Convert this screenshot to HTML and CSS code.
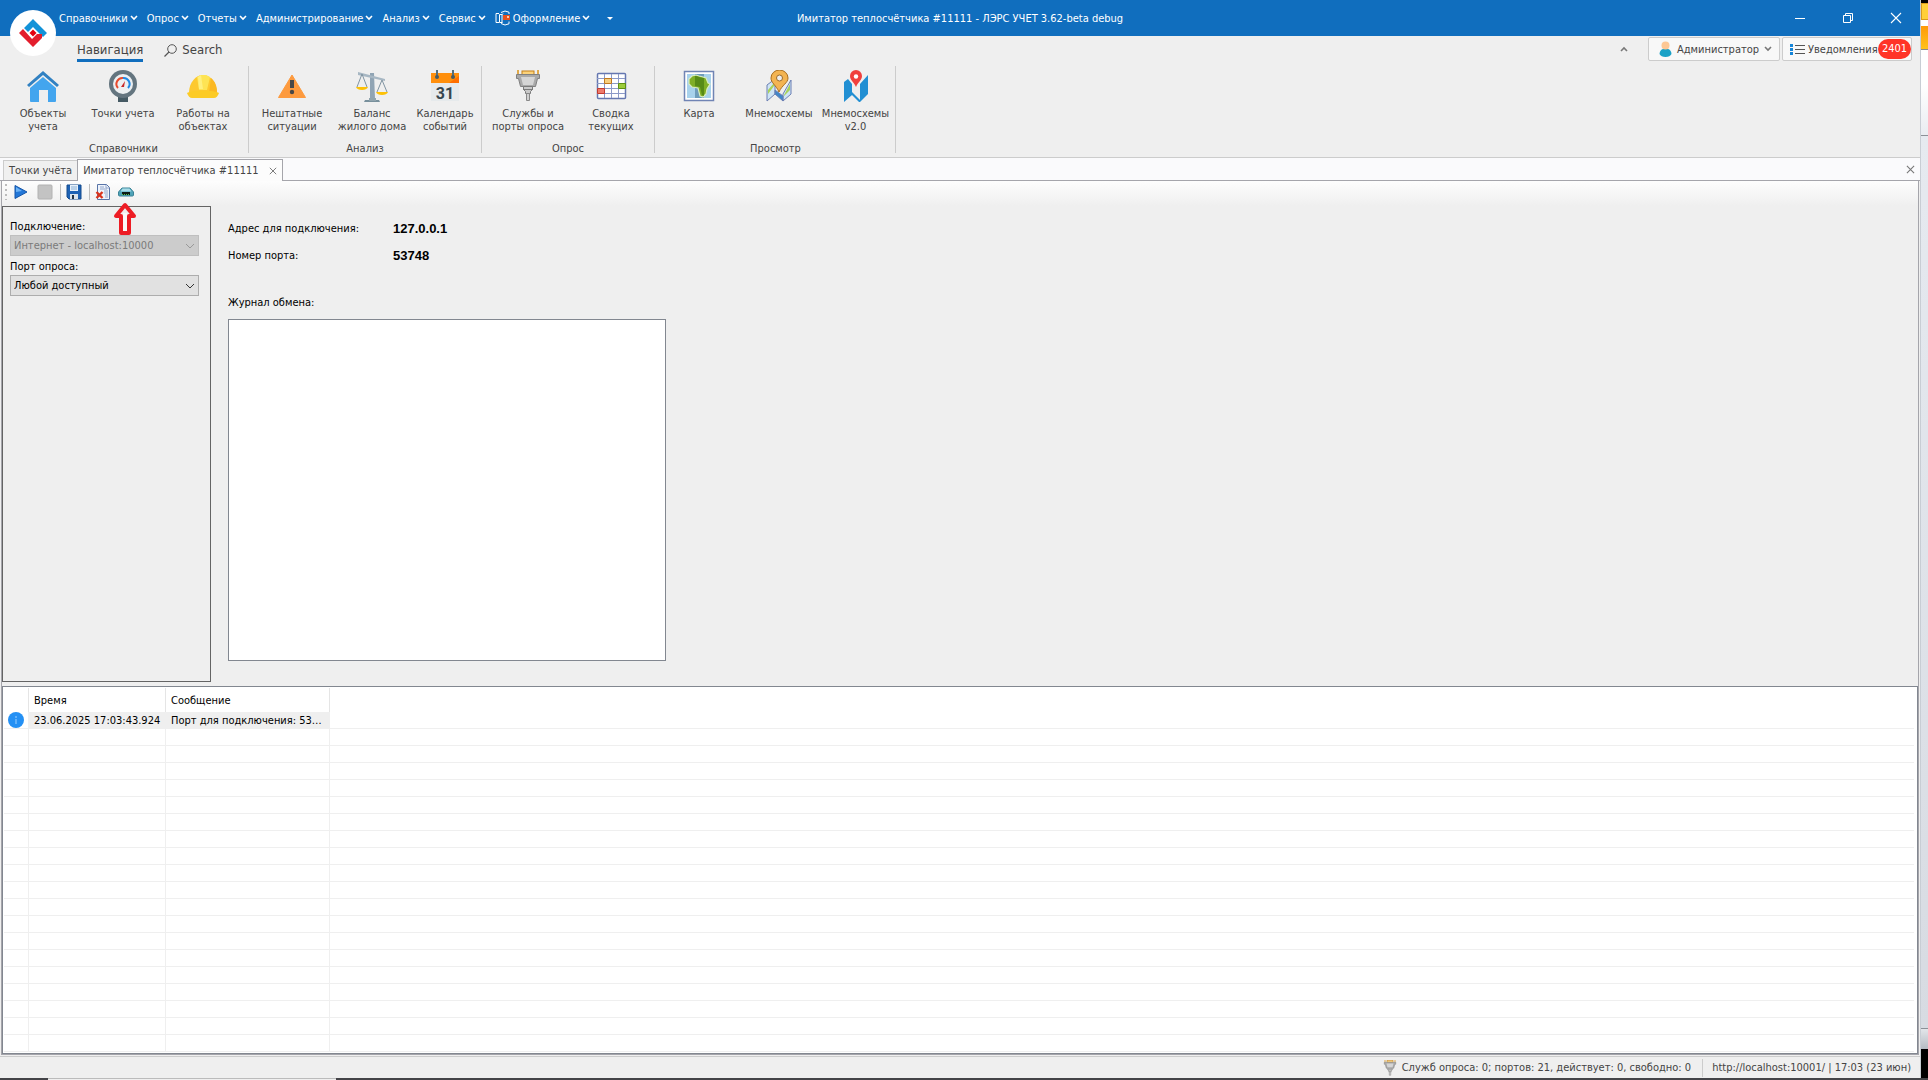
FILE: index.html
```
<!DOCTYPE html>
<html lang="ru">
<head>
<meta charset="utf-8">
<title>Имитатор теплосчётчика #11111 - ЛЭРС УЧЕТ 3.62-beta debug</title>
<link rel="stylesheet" href="styles.css">
</head>
<body>
<svg class="defs" aria-hidden="true">
  <symbol id="chev" viewBox="0 0 8 6"><path d="M1 1l3 3 3-3" fill="none" stroke="currentColor" stroke-width="1.6"/></symbol>
  <symbol id="cross" viewBox="0 0 10 10"><path d="M1 1l8 8M9 1L1 9" fill="none" stroke="currentColor" stroke-width="1.2"/></symbol>
  <symbol id="plug" viewBox="0 0 32 32">
    <rect x="10" y="1" width="12" height="4" fill="#fbd27a" stroke="#c47f17"/>
    <path d="M6 0v5M26 0v5" stroke="#e0a94a" stroke-width="2"/>
    <path d="M4.500 4.500h23v4h-2l-2 8h-15l-2-8h-2z" fill="#a9a9a9" stroke="#808080"/><path d="M9 7h14l-2 8H11z" fill="#d5d5d5"/>
    <path d="M11.500 16.500h9v3l-2 2v2h-5v-2l-2-2z" fill="#c9c9c9" stroke="#7a7a7a"/><path d="M11 19.500h10" stroke="#7a7a7a"/>
    <path d="M14.500 23.500h3v7h-3z" fill="#d0d0d0" stroke="#888"/>
  </symbol>
</svg>
<div class="desktop">
  <div class="window">
    <header class="titlebar">
      <nav class="menu" aria-label="Меню">
        <button>Справочники<svg class="chev"><use href="#chev"/></svg></button>
        <button>Опрос<svg class="chev"><use href="#chev"/></svg></button>
        <button>Отчеты<svg class="chev"><use href="#chev"/></svg></button>
        <button>Администрирование<svg class="chev"><use href="#chev"/></svg></button>
        <button>Анализ<svg class="chev"><use href="#chev"/></svg></button>
        <button>Сервис<svg class="chev"><use href="#chev"/></svg></button>
        <button><svg class="skin" viewBox="0 0 16 16"><path d="M4 3.500H1v9h3M7.500 12.500h-3v-8h3M8 3.500l-1 1v8M6 2.500L10 1l4 1.200V4M14 11.500v2.300L10 15l-4-1.500" fill="none" stroke="#fff"/><rect x="8" y="5" width="7" height="5" fill="#e8501c"/><rect x="12" y="6" width="2" height="2" fill="#ffc9a8"/></svg>Оформление<svg class="chev"><use href="#chev"/></svg></button>
        <button class="more" aria-label="Ещё"><svg class="tri" viewBox="0 0 6 3"><path d="M0 0h6L3 3z" fill="#fff"/></svg></button>
      </nav>
      <h1 class="caption">Имитатор теплосчётчика #11111 - ЛЭРС УЧЕТ 3.62-beta debug</h1>
      <div class="wincontrols">
        <button aria-label="Свернуть"><svg viewBox="0 0 10 10"><path d="M0 5.500h10" stroke="#fff"/></svg></button>
        <button aria-label="Восстановить"><svg viewBox="0 0 10 10"><path d="M.5 2.500h7v7h-7zM2.500 2.500v-2h7v7h-2" fill="none" stroke="#fff"/></svg></button>
        <button aria-label="Закрыть"><svg viewBox="0 0 10 10"><path d="M0 0l10 10M10 0L0 10" stroke="#fff" stroke-width="1.100"/></svg></button>
      </div>
    </header>
    <svg class="logo" viewBox="0 0 46 46"><circle cx="23" cy="23" r="23" fill="#fff"/>
      <path d="M23 9l14 14-4 4-10-10-5 5-4-4z" fill="#1292d8"/><path d="M9 23l4-4 9 10 5-5h5v4L23 37z" fill="#e31e2d"/><path d="M23 19.500l3.500 3.500-3.500 3.500-3.500-3.500z" fill="#e3000f"/></svg>

    <section class="ribbon">
      <div class="ribbon-tabs">
        <button class="rtab active">Навигация</button>
        <button class="rtab search"><svg viewBox="0 0 13 13"><circle cx="8" cy="5" r="4.300" fill="none" stroke="#555"/><path d="M5 8l-4.500 4.500" stroke="#555" stroke-width="1.300"/></svg>Search</button>
        <div class="account">
          <button class="collapse" aria-label="Свернуть ленту"><svg class="chev up"><use href="#chev"/></svg></button>
          <button class="boxed admin"><svg viewBox="0 0 13 16"><path d="M.5 13c0-3 2-5 4-5h4c2 0 4 2 4 5-1 2-3 3-6 3s-5-1-6-3z" fill="#1ba1c6"/><circle cx="6.500" cy="4.500" r="4" fill="#fdc794"/></svg>Администратор<svg class="chev"><use href="#chev"/></svg></button>
          <button class="boxed notes"><svg viewBox="0 0 15 11"><path d="M5 1.500h10M5 5.500h10M5 9.500h10" stroke="#555"/><path d="M0 1.500h3M0 5.500h3M0 9.500h3" stroke="#1585d8" stroke-width="3" stroke-dasharray="3"/></svg>Уведомления<span class="badge">2401</span></button>
        </div>
      </div>
      <div class="groups">
        <div class="group">
          <div class="items">
            <button><svg viewBox="0 0 32 32"><path d="M0 15L16 1l16 14-2 2L16 5 2 17z" fill="#3181c2"/><path d="M3 18L16 7l13 11v13a1 1 0 0 1-1 1h-7V20h-9v12H4a1 1 0 0 1-1-1z" fill="#43a5ee"/></svg>Объекты<br>учета</button>
            <button><svg viewBox="0 0 32 32"><path d="M11 25h10v7H11z" fill="#455a64"/><circle cx="16" cy="14" r="14" fill="#64757f"/><circle cx="16" cy="14" r="10" fill="#eceff1"/><path d="M11 18a6 6 0 0 1 5-10" fill="none" stroke="#e64a2e" stroke-width="2"/><path d="M16 8a6 6 0 0 1 5 10" fill="none" stroke="#1e88e5" stroke-width="2"/><path d="M14 17l4-6-1 6z" fill="#c62828"/></svg>Точки учета</button>
            <button><svg viewBox="0 0 32 32"><path d="M2 23C2 12 9 5 16 5s14 7 14 18z" fill="#fdc92e"/><path d="M24 8c4 3 6 8 6 15h-8z" fill="#fbb823"/><path d="M10 7l4-2h5l4 2-3 13h-8z" fill="#fee454"/><path d="M11 7l3-2 2 14h-4z" fill="#fff07e"/><path d="M0 23c4-3 28-3 32 0-1 3-3 5-5 5H5c-2 0-4-2-5-5z" fill="#fccb25"/></svg>Работы на<br>объектах</button>
          </div>
          <div class="gcap">Справочники</div>
        </div>
        <div class="group">
          <div class="items">
            <button><svg viewBox="0 0 32 32"><path d="M16 5l13.500 22.500h-27z" fill="#fd9a3e" stroke="#fd9a3e" stroke-linejoin="round"/><path d="M14 10h4v8h-4z" fill="#484848"/><circle cx="16" cy="22" r="2.200" fill="#484848"/></svg>Нештатные<br>ситуации</button>
            <button><svg viewBox="0 0 32 32"><path d="M14 3h4l1 26h-5z" fill="#90a4b4"/><path d="M2 2l27 7v2L2 5z" fill="#a7b7c3"/><path d="M9 30h14l1 2H8z" fill="#78909c"/><path d="M13 28h7v3h-7z" fill="#90a4ae"/><path d="M6 4L1 17M6 4l5 13M26 10l-5 12M26 10l5 12" fill="none" stroke="#8094a2"/><path d="M0 17h12c-1 4-11 4-12 0zM20 22h12c-1 4-11 4-12 0z" fill="#fdc107"/></svg>Баланс<br>жилого дома</button>
            <button class="narrow"><svg viewBox="0 0 32 32"><path d="M2 13h28v18H2z" fill="#e6eaec"/><path d="M2 3h28v10H2z" fill="#ff8f0c"/><path d="M20 13L30 6v7z" fill="#ff6f00"/><path d="M8 0v6M24 0v6" stroke="#546e7a" stroke-width="2"/><circle cx="8" cy="7" r="2" fill="#455a64"/><circle cx="24" cy="7" r="2" fill="#455a64"/><text x="16" y="29" text-anchor="middle" class="calnum">31</text></svg>Календарь<br>событий</button>
          </div>
          <div class="gcap">Анализ</div>
        </div>
        <div class="group">
          <div class="items">
            <button class="wide"><svg><use href="#plug"/></svg>Службы и<br>порты опроса</button>
            <button><svg viewBox="0 0 32 32"><rect x="2.500" y="3.500" width="28" height="25" rx="1" fill="#fff" stroke="#6577b0" stroke-width="1.500"/><path d="M2 8.500h28M2 13.500h28M2 18.500h28M2 23.500h28M9.500 4v24M16.500 4v24M23.500 4v24" stroke="#8c9ac8"/><path d="M9.500 8.500h7v5h-7z" fill="#f8cf7c" stroke="#c0791f"/><path d="M23.500 13.500h7v5h-7z" fill="#9ccc3c" stroke="#5d8f12"/><path d="M2.500 18.500h7v5h-7z" fill="#ee7b6c" stroke="#c23a2e"/></svg>Сводка<br>текущих</button>
          </div>
          <div class="gcap">Опрос</div>
        </div>
        <div class="group">
          <div class="items">
            <button><svg viewBox="0 0 32 32"><path d="M1.500 1.500h29v29h-29z" fill="#fff" stroke="#7084b4" stroke-width="1.500"/><path d="M4 4h24v24H4z" fill="#a8d2ec"/><path d="M12 4h9v24h-9z" fill="#6f9dbb"/><path d="M6 9l3-3 4-1 3 1 4 1 3 1 2 5 2 1-3 5-1 5-3 3-3-1-2-8-6-1-3-3z" fill="#7fae26" stroke="#d9ecc0" stroke-width="1.200"/><path d="M12 6h1l3 1 4 1 1 0v18l-2-1-2-8-5-1z" fill="#578a17"/></svg>Карта</button>
            <button><svg viewBox="0 0 32 32"><path d="M4 15l8-6v15l-8 7zM20 24l8-14v14l-8 7z" fill="#cfe5f5" stroke="#6b7fb3"/><path d="M12 20l8 6v5l-8-7z" fill="#3e87c9" stroke="#6b7fb3"/><path d="M5 20l6-7v3l-6 8zM21 25l6-11v6l-6 6z" fill="#a8d25a"/><path d="M16 22C13 15 8 13 8 8a8.500 8 0 0 1 17 0c0 5-6 7-9 14z" fill="#f3b452" stroke="#a96d1e"/><circle cx="16.500" cy="8" r="3" fill="#eee" stroke="#9b6a2a"/></svg>Мнемосхемы</button>
            <button class="mid"><svg viewBox="0 0 32 32"><path d="M4 12l4-3 4 5v11l-8 7zM12 22l8 8v2h-1l-8-8zM20 14l8-9v19l-8 8z" fill="#218fd3"/><path d="M12 14l8 3v11l-8-7z" fill="#eee"/><path d="M16 17C14 12 10 10 10 6a6 6 0 0 1 12 0c0 4-4 6-6 11z" fill="#f0403d"/><circle cx="16" cy="6.500" r="2.200" fill="#fff"/></svg>Мнемосхемы<br>v2.0</button>
          </div>
          <div class="gcap">Просмотр</div>
        </div>
      </div>
    </section>

    <div class="doctabs">
      <button class="dtab">Точки учёта</button>
      <button class="dtab current">Имитатор теплосчётчика #11111<svg class="x"><use href="#cross"/></svg></button>
      <button class="closeall" aria-label="Закрыть"><svg class="x"><use href="#cross"/></svg></button>
    </div>

    <main class="doc">
      <div class="toolbar">
        <span class="grip"></span>
        <button aria-label="Пуск"><svg viewBox="0 0 16 16"><path d="M2 1.500L14 8 2 14.500z" fill="#2277d8" stroke="#1555a8"/><path d="M3 3l6 4-6 1z" fill="#6cb2f5"/></svg></button>
        <button class="gap" aria-label="Стоп" disabled><svg viewBox="0 0 16 16"><rect x="1" y="1" width="14" height="14" rx="1" fill="#c3c3c3" stroke="#b2b2b2"/></svg></button>
        <span class="tsep"></span>
        <button aria-label="Сохранить"><svg viewBox="0 0 16 16"><path d="M1 1h14v14H3l-2-2z" fill="#1d62b5" stroke="#154a8c"/><path d="M4 1h8v6H4z" fill="#e8f1fa"/><path d="M5 3h6M5 5h6" stroke="#8bb0d6"/><path d="M4 10h8v5H4z" fill="#dbe3ea"/><path d="M6 11h2v4H6z" fill="#234"/></svg></button>
        <span class="tsep"></span>
        <button aria-label="Очистить"><svg viewBox="0 0 16 16"><path d="M2.500.5h9l3 3v12h-12z" fill="#eef3fb" stroke="#5874a8"/><path d="M11 1v3h3M5 3h4M5 5h7M9 7h4M9 9h4M10 11h3M10 13h3" stroke="#93a7cc" fill="none"/><path d="M1.500 8l6 6M7.500 8l-6 6" stroke="#d9331c" stroke-width="2.400"/></svg></button>
        <button class="modem" aria-label="Модем"><svg viewBox="0 0 16 16"><path d="M4 4h8l3.500 4v3c0 1-1 1-1 1h-13s-1 0-1-1V8z" fill="#4fa3b8" stroke="#3c8296"/><path d="M4.500 4.500h7l2 3h-11z" fill="#a8dce8"/><path d="M4 8h8v3H4z" fill="#101a14"/><path d="M4 10.500h8" stroke="#57c24f" stroke-dasharray="1 1"/></svg></button>
        <svg class="pointer" viewBox="0 0 24 34"><path d="M12 3L3 14h5v17h8V14h5z" fill="none" stroke="#ed1c24" stroke-width="4" stroke-linejoin="round"/><path d="M10 11h4v18h-4z" fill="#fafafa"/></svg>
      </div>
      <div class="workspace">
        <form class="side">
          <label for="conn">Подключение:</label>
          <div class="combo"><select id="conn" disabled><option>Интернет - localhost:10000</option></select><svg viewBox="0 0 10 6"><path d="M1 1l4 4 4-4" fill="none" stroke="#999"/></svg></div>
          <label for="port">Порт опроса:</label>
          <div class="combo"><select id="port"><option>Любой доступный</option></select><svg viewBox="0 0 10 6"><path d="M1 1l4 4 4-4" fill="none" stroke="#333"/></svg></div>
        </form>
        <div class="details">
          <dl class="facts">
            <dt>Адрес для подключения:</dt><dd>127.0.0.1</dd>
            <dt>Номер порта:</dt><dd>53748</dd>
          </dl>
          <label for="log">Журнал обмена:</label>
          <textarea id="log" readonly></textarea>
        </div>
      </div>
      <div class="journal">
        <table>
          <colgroup><col class="c-icon"><col class="c-time"><col class="c-msg"><col></colgroup>
          <thead><tr><th></th><th>Время</th><th>Сообщение</th><th></th></tr></thead>
          <tbody>
            <tr class="sel"><td><svg viewBox="0 0 16 16"><circle cx="8" cy="8" r="8" fill="#2490f4"/><path d="M8 7v5M8 4v2" stroke="#9cd0ff"/></svg></td><td>23.06.2025 17:03:43.924</td><td class="msg">Порт для подключения: 53748</td><td></td></tr>
            <tr><td></td><td></td><td></td><td></td></tr><tr><td></td><td></td><td></td><td></td></tr>
            <tr><td></td><td></td><td></td><td></td></tr><tr><td></td><td></td><td></td><td></td></tr>
            <tr><td></td><td></td><td></td><td></td></tr><tr><td></td><td></td><td></td><td></td></tr>
            <tr><td></td><td></td><td></td><td></td></tr><tr><td></td><td></td><td></td><td></td></tr>
            <tr><td></td><td></td><td></td><td></td></tr><tr><td></td><td></td><td></td><td></td></tr>
            <tr><td></td><td></td><td></td><td></td></tr><tr><td></td><td></td><td></td><td></td></tr>
            <tr><td></td><td></td><td></td><td></td></tr><tr><td></td><td></td><td></td><td></td></tr>
            <tr><td></td><td></td><td></td><td></td></tr><tr><td></td><td></td><td></td><td></td></tr>
            <tr><td></td><td></td><td></td><td></td></tr><tr><td></td><td></td><td></td><td></td></tr>
            <tr><td></td><td></td><td></td><td></td></tr>
          </tbody>
        </table>
      </div>
    </main>

    <footer class="status">
      <svg viewBox="0 0 32 32"><use href="#plug"/></svg>
      <span>Служб опроса: 0; портов: 21, действует: 0, свободно: 0</span>
      <span class="srv">http://localhost:10001/ | 17:03 (23 июн)</span>
    </footer>
  </div>
  <aside class="behind">
    <div class="b-top"></div><div class="b-icon"></div><div class="b-gap"></div><div class="b-tab"></div><div class="b-ribbon"></div>
    <div class="b-body"></div><div class="b-foot"></div><div class="b-dark"></div>
  </aside>
  <div class="taskbar"><span></span></div>
</div>
</body>
</html>
```
FILE: styles.css
```
* { box-sizing: border-box; }
body {
  margin: 0;
  font: 11px/13px "DejaVu Sans Condensed", "DejaVu Sans", sans-serif;
  color: #000;
  background: #000;
}
button { font: inherit; color: inherit; background: none; border: 0; padding: 0; margin: 0; }
svg { display: block; flex: none; }
.defs { position: absolute; width: 0; height: 0; }
.chev { width: 8px; height: 6px; }
.up { transform: rotate(180deg); }
.x { width: 9px; height: 9px; color: #777; }

.desktop {
  display: grid;
  grid-template: 1fr 2px / 1fr 8px;
  min-height: 100vh;
}
.window {
  position: relative;
  display: flex;
  flex-direction: column;
  min-width: 0;
  background: #efefef;
}

/* title bar */
.titlebar {
  display: grid;
  grid-template-columns: 1fr auto 1fr;
  align-items: center;
  height: 36px;
  background: #106ebe;
  color: #fff;
}
.menu { display: flex; gap: 9px; padding-left: 59px; }
.menu button { display: flex; align-items: center; gap: 2px; white-space: nowrap; }
.menu .more { margin-left: 8px; }
.skin { width: 16px; height: 16px; }
.tri { width: 6px; height: 3px; }
.caption { margin: 0; font-size: 11px; font-weight: 400; white-space: nowrap; }
.wincontrols { display: flex; justify-content: flex-end; }
.wincontrols button { width: 48px; height: 36px; display: flex; align-items: center; justify-content: center; }
.wincontrols svg { width: 10px; height: 10px; overflow: visible; }
.logo { position: absolute; left: 10px; top: 10px; width: 46px; height: 46px; }

/* ribbon */
.ribbon { height: 122px; border-bottom: 1px solid #ccc; color: #444; }
.ribbon-tabs { display: flex; height: 30px; padding-left: 77px; }
.rtab { font-size: 13px; line-height: 16px; height: 26px; padding-top: 4px; }
.rtab.active { border-bottom: 3px solid #106ebe; }
.search { display: flex; align-items: center; gap: 5px; margin-left: 21px; padding-top: 2px; }
.search svg { width: 13px; height: 13px; }
.account { display: flex; gap: 2px; margin: 1px 8px 0 auto; height: 24px; }
.collapse { display: flex; align-items: center; justify-content: center; width: 44px; color: #777; }
.boxed {
  display: flex;
  align-items: center;
  background: #f8f8f8;
  border: 1px solid #ccc;
  border-radius: 2px;
}
.admin { width: 132px; padding-left: 10px; gap: 5px; }
.admin > svg:first-child { width: 13px; height: 16px; }
.admin .chev { color: #777; }
.notes { position: relative; width: 130px; padding-left: 7px; gap: 3px; }
.notes svg { width: 15px; height: 11px; }
.badge {
  position: absolute;
  right: 0;
  top: 1px;
  width: 33px;
  border-radius: 10px;
  background: #ff3427;
  color: #fff;
  line-height: 20px;
  text-align: center;
}
.groups { display: flex; height: 91px; }
.group {
  display: flex;
  flex-direction: column;
  justify-content: space-between;
  height: 87px;
  padding: 0 3px;
  border-right: 1px solid #ccc;
}
.group:first-child { padding: 0 4px 0 3px; width: 249px; }
.items { display: flex; align-items: flex-start; }
.items button { width: 80px; padding-top: 4px; white-space: nowrap; text-align: center; }
.items svg { width: 32px; height: 32px; margin: 0 auto 5px; }
.items .narrow { width: 66px; }
.items .mid { width: 73px; }
.items .wide { width: 86px; }
.group:last-child { padding-left: 4px; }
.calnum { font: bold 16px Roboto, sans-serif; fill: #37474f; }
.gcap { line-height: 8px; text-align: center; }

/* document tabs */
.doctabs {
  display: flex;
  align-items: flex-end;
  height: 23px;
  padding-left: 3px;
  background: #fafafc;
  border-bottom: 1px solid #a5a5ab;
  color: #444;
}
.dtab { height: 20px; padding: 0 5px; border: 1px solid #ccc; border-width: 1px 0 0 1px; background: #f0f0f0; }
.dtab.current {
  display: flex;
  align-items: center;
  gap: 10px;
  height: 22px;
  margin-bottom: -1px;
  padding: 0 5px;
  border: 1px solid #a5a5ab;
  border-bottom: 0;
  background: #fcfcfc;
}
.dtab.current .x { width: 8px; height: 8px; }
.closeall { margin: 0 5px 6px auto; }

/* document */
.doc { display: flex; flex-direction: column; flex: 1; border: 1px solid #a5a5ab; border-top: 0; margin: 0 1px; }
.toolbar {
  position: relative;
  display: flex;
  align-items: center;
  height: 25px;
  padding: 0 0 3px 3px;
  background: linear-gradient(#fdfdfd, #efefef);
}
.toolbar svg { width: 16px; height: 16px; }
.grip { width: 2px; height: 16px; margin-right: 6px; background: repeating-linear-gradient(#bbb 0 2px, transparent 2px 5px); }
.gap { margin-left: 8px; }
.tsep { width: 1px; height: 16px; margin: 0 5px 0 7px; background: #bdbdbd; }
.modem { margin-left: 7px; }
.toolbar .pointer { position: absolute; left: 111px; top: 21px; width: 24px; height: 34px; z-index: 1; }

.workspace { display: flex; gap: 17px; height: 480px; padding-bottom: 4px; }
.side { width: 209px; padding: 13px 11px 0 7px; border: 1px solid #646464; }
.side label { display: block; margin-bottom: 2px; }
.combo { position: relative; margin-bottom: 4px; }
.combo select {
  display: block;
  appearance: none;
  width: 100%;
  height: 21px;
  padding: 0 3px;
  font: inherit;
  color: #000;
  background: #e1e1e1;
  border: 1px solid #adadad;
  border-radius: 0;
}
.combo select:disabled { color: #7a7a7a; background: #ccc; border-color: #bfbfbf; opacity: 1; }
.combo svg { position: absolute; right: 4px; top: 8px; width: 10px; height: 6px; }
.details { padding-top: 16px; }
.facts { display: grid; grid-template-columns: 165px auto; row-gap: 14px; margin: 0 0 34px; }
.facts dd { margin: 0; font: bold 13px/13px "Liberation Sans", Arial, sans-serif; }
.details textarea {
  display: block;
  width: 438px;
  height: 342px;
  margin-top: 10px;
  background: #fff;
  border: 1px solid #828790;
  resize: none;
}

.journal { flex: 1; padding: 1px 3px 1px 1px; background: #fff; border: 1px solid #828790; }
table { width: 100%; table-layout: fixed; border-collapse: separate; border-spacing: 0; }
.c-icon { width: 25px; }
.c-time { width: 137px; }
.c-msg { width: 164px; }
th { height: 24px; padding: 0 5px; text-align: left; font-weight: 400; border-right: 1px solid #e5e5e5; }
td {
  height: 17px;
  padding: 2px 0 0 5px;
  line-height: 14px;
  border: solid #efefef;
  border-width: 0 1px 1px 0;
  overflow: hidden;
  white-space: nowrap;
  text-overflow: ellipsis;
}
th:last-child, td:last-child { border-right: 0; }
td:first-child { padding: 0 4px; }
td svg { width: 16px; height: 16px; }
.msg { padding-right: 5px; }
.sel td:nth-child(2), .sel td:nth-child(3) { background: #efefef; }

/* status bar */
.status {
  display: flex;
  align-items: center;
  justify-content: flex-end;
  gap: 4px;
  height: 22px;
  margin-top: 1px;
  padding-right: 9px;
  border-top: 1px solid #ccc;
  color: #444;
}
.status svg { width: 16px; height: 16px; }
.srv { margin-left: 7px; padding-left: 9px; border-left: 1px solid #ccc; line-height: 18px; }

/* slice of the window behind */
.behind { display: flex; flex-direction: column; background: #dbdfe6; border-left: 1px solid #c8cdd4; }
.b-top { height: 3px; background: #000; }
.b-icon { height: 17px; background: #ffcf3a; border: 1px solid #d99a1c; border-right: 0; }
.b-gap { height: 6px; background: #fff; }
.b-tab { height: 24px; background: linear-gradient(#ff9a08, #ffc21c); border-bottom: 1px solid #8a8a8a; }
.b-ribbon { height: 86px; background: linear-gradient(#fff 40%, #e9ecf1); border-bottom: 1px solid #8b9097; }
.b-body { flex: 1; background: linear-gradient(#e6eaf0, #d7dbe2); }
.b-foot { height: 21px; background: linear-gradient(#e3e6ea, #b5bbc3); border-top: 1px solid #8b9097; }
.b-dark { height: 29px; background: #000; }

.taskbar { grid-column: 1 / -1; padding-left: 48px; background: #444448; }
.taskbar span { display: block; width: 288px; height: 2px; background: #efefef; border-top: 1px solid #bbb; }
```
